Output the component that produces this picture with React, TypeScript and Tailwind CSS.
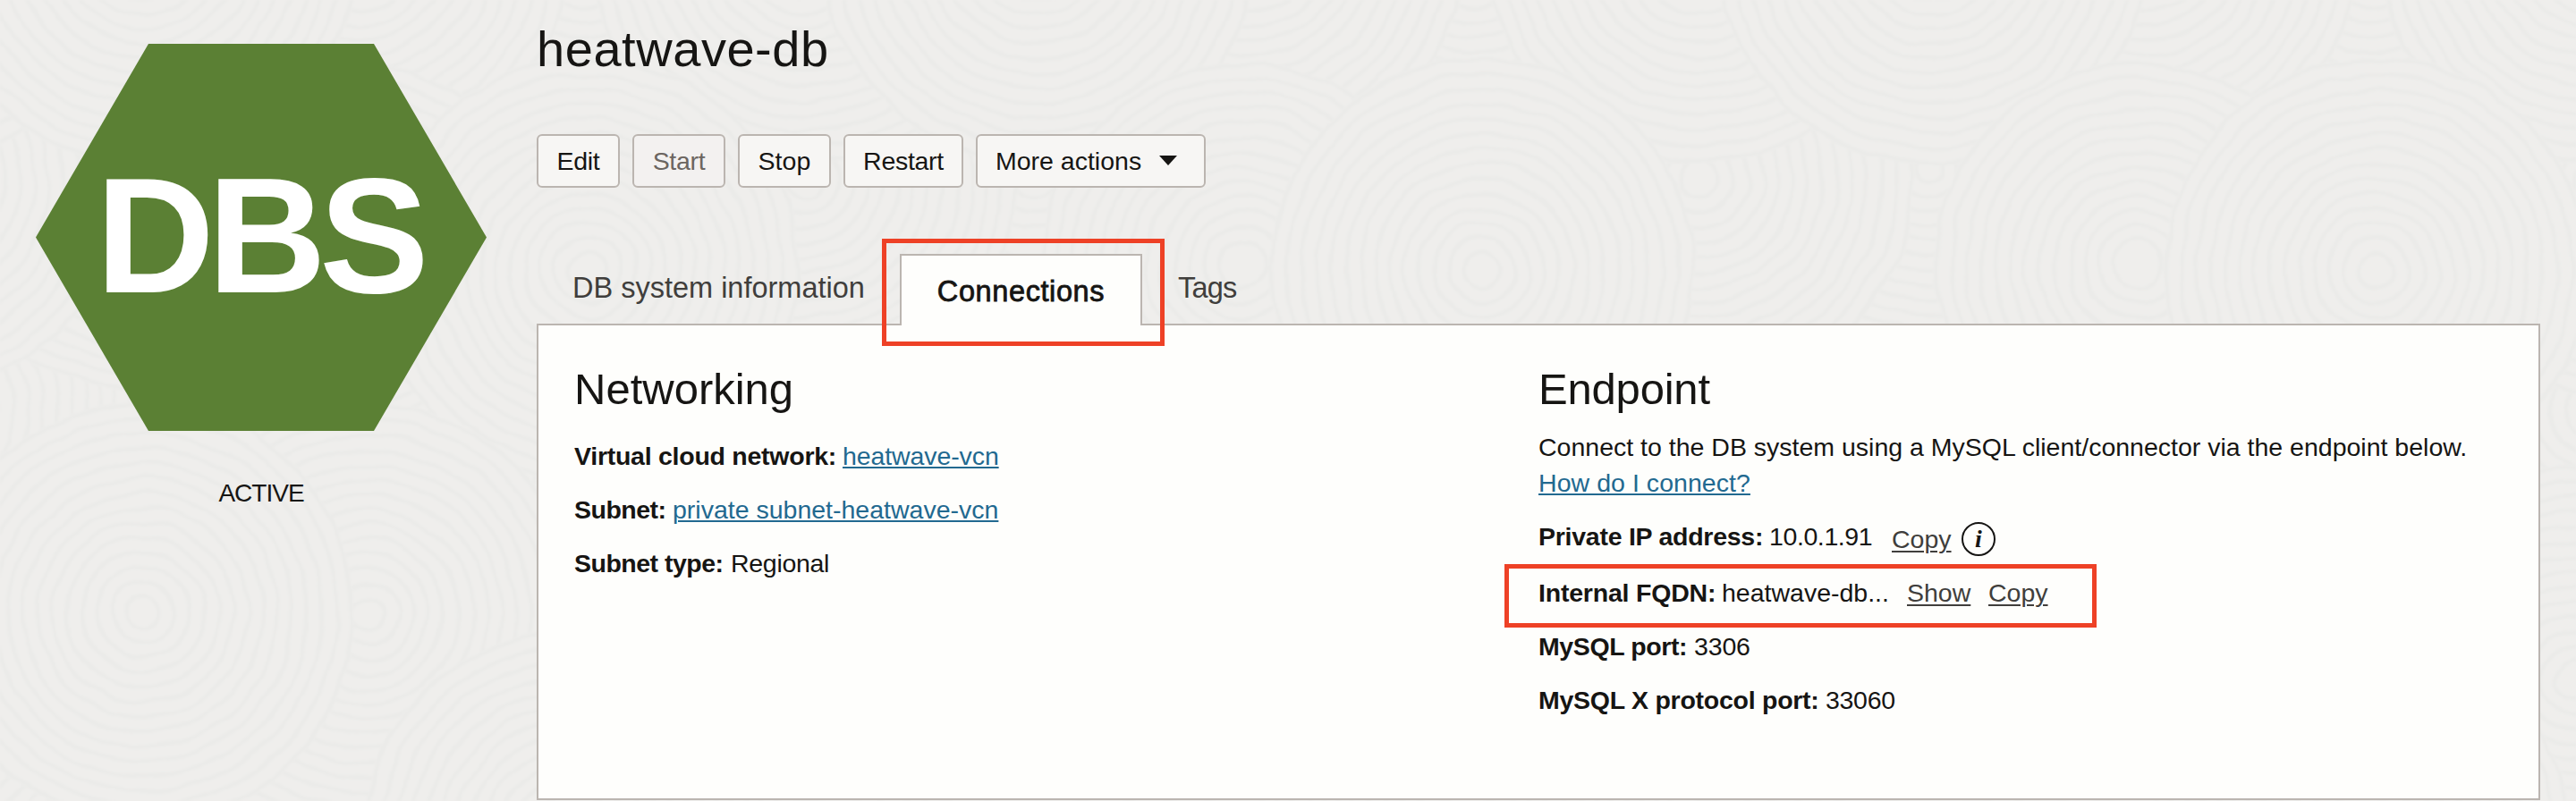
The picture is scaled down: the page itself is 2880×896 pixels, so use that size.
import React from "react";

type Ring = { x: number; y: number; r: number };

/* Later rings overlap the earlier ones. The motif repeats every 1000px. */
const MOTIF: Ring[] = [
  { x: 500, y: 520, r: 250 },
  { x: 900, y: 460, r: 250 },
  { x: 157, y: 188, r: 250 },
  { x: 900, y: 200, r: 240 },
  { x: 650, y: -40, r: 250 },
  { x: 400, y: -60, r: 240 },
  { x: 900, y: -60, r: 242 },
  { x: 160, y: -60, r: 244 },
  { x: 390, y: 296, r: 228 },
  { x: 657, y: 302, r: 238 },
  { x: 880, y: 760, r: 240 },
  { x: 411, y: 687, r: 236 },
  { x: 160, y: 685, r: 236 },
  { x: 640, y: 940, r: 236 },
];

const RINGS: Ring[] = MOTIF.flatMap((m) =>
  [-1000, 0, 1000, 2000].map((dx) => ({ ...m, x: m.x + dx })),
);

function Backdrop() {
  return (
    <svg className="absolute inset-0 h-full w-full" viewBox="0 0 2880 896" aria-hidden="true">
      <filter id="soften" x="0" y="0" width="2880" height="896" filterUnits="userSpaceOnUse">
        <feTurbulence type="fractalNoise" baseFrequency="0.02" numOctaves={2} seed={4} />
        <feDisplacementMap in="SourceGraphic" scale={11} xChannelSelector="R" yChannelSelector="G" />
        <feGaussianBlur stdDeviation={1.2} />
      </filter>
      <g filter="url(#soften)">
        <rect x="-20" y="-20" width="2920" height="936" fill="#efeeec" />
        {RINGS.map((ring, i) => {
          const steps = Math.floor(ring.r / 16.5);
          return (
            <g key={i} fill="none" stroke="#ebebe9" strokeWidth={5}>
              <circle cx={ring.x} cy={ring.y} r={ring.r} fill="#efeeec" stroke="none" />
              {Array.from({ length: steps }, (_, n) => (
                <circle key={n} cx={ring.x} cy={ring.y} r={ring.r - 3 - n * 16.5} />
              ))}
            </g>
          );
        })}
      </g>
    </svg>
  );
}

const BUTTON =
  "flex h-[60px] items-center justify-center rounded-[6px] border-2 border-[#bbb5b0] bg-[#f7f6f4] pb-px text-[28.5px] leading-[40px]";

function Label({ className, children }: { className: string; children: React.ReactNode }) {
  return <span className={`shrink-0 font-bold ${className}`}>{children}</span>;
}

function Link({ className = "", children }: { className?: string; children: React.ReactNode }) {
  return (
    <a
      className={`text-[#226990] underline decoration-[#226990] decoration-2 underline-offset-[2px] ${className}`}
    >
      {children}
    </a>
  );
}

function Action({ children }: { children: React.ReactNode }) {
  return (
    <a className="text-[#403e3c] underline decoration-2 underline-offset-[3px]">{children}</a>
  );
}

export default function App() {
  return (
    <div
      className="relative flex h-[896px] w-[2880px] overflow-hidden bg-[#efeeec] text-[#161513]"
      style={{ fontFamily: '"Liberation Sans", Arial, sans-serif' }}
    >
      <Backdrop />

      <aside className="relative flex w-[584px] shrink-0 flex-col items-center pt-[49px]">
        <svg width="504" height="433" viewBox="40 49 504 433" className="block">
          <polygon points="166,49 418,49 544,265.5 418,482 166,482 40,265.5" fill="#5b8034" />
          <text
            x="107"
            y="327.2"
            fill="#ffffff"
            fontSize="184"
            fontWeight="700"
            className="tracking-[-7.9px]"
          >
            DBS
          </text>
        </svg>
        <p className="mt-[50px] text-[28px] leading-[40px] tracking-[-1px]">ACTIVE</p>
      </aside>

      <main className="relative ml-4 w-[2240px] pt-[19px]">
        <h1 className="text-[56px] leading-[72px] tracking-[0.55px]">heatwave-db</h1>

        <div className="mt-[59px] flex">
          <button className={`${BUTTON} w-[93px] tracking-[-0.3px]`}>Edit</button>
          <button
            className={`${BUTTON} ml-[14px] w-[104px] bg-[#f3f1f0]! tracking-[-0.3px] text-[#6b6560]`}
          >
            Start
          </button>
          <button className={`${BUTTON} ml-[14px] w-[104px] tracking-[0.1px]`}>Stop</button>
          <button className={`${BUTTON} ml-[14px] w-[134px] tracking-[-0.3px]`}>Restart</button>
          <button className={`${BUTTON} ml-[14px] w-[257px] justify-start! pl-[20px]`}>
            More actions
            <svg width="20" height="11" viewBox="0 0 20 11" className="ml-[20px]">
              <path d="M0 0H20L10 11Z" fill="#161513" />
            </svg>
          </button>
        </div>

        <nav className="mt-[74px] flex h-[78px] text-[32.5px] leading-[40px] text-[#403e3c]">
          <a className="w-[406px] pt-[18px] pl-[40px]">DB system information</a>
          <div className="relative z-10 h-[80px] w-[271px] border-2 border-b-0 border-[#bbb5b0] bg-[#fefefc] pt-[20px] text-center tracking-[0.6px] text-[#161513] [-webkit-text-stroke:0.8px_#161513]">
            Connections
          </div>
          <a className="pt-[18px] pl-[40px] tracking-[-0.8px]">Tags</a>
        </nav>

        <section className="flex h-[533px] border-2 border-[#bbb5b0] bg-[#fefefc] pt-[41px] pl-[40px] text-[28.5px] leading-[40px]">
          <div className="w-[1078px] shrink-0">
            <h2 className="text-[49px] leading-[60px]">Networking</h2>
            <div className="mt-[25px] flex flex-col gap-5">
              <div className="flex">
                <Label className="w-[300px] tracking-[-0.26px]">Virtual cloud network:</Label>
                <Link className="tracking-[-0.1px]">heatwave-vcn</Link>
              </div>
              <div className="flex">
                <Label className="w-[110px] tracking-[-0.5px]">Subnet:</Label>
                <Link>private subnet-heatwave-vcn</Link>
              </div>
              <div className="flex">
                <Label className="w-[175px] tracking-[-0.5px]">Subnet type:</Label>
                <span className="tracking-[-0.3px]">Regional</span>
              </div>
            </div>
          </div>

          <div>
            <h2 className="text-[49px] leading-[60px] tracking-[-0.2px]">Endpoint</h2>
            <p className="mt-[15px] whitespace-nowrap">
              Connect to the DB system using a MySQL client/connector via the endpoint below.
              <br />
              <Link className="tracking-[0.05px]">How do I connect?</Link>
            </p>
            <div className="mt-5 flex h-10">
              <Label className="w-[258px] tracking-[-0.26px]">Private IP address:</Label>
              <span className="w-[137px] tracking-[-0.4px]">10.0.1.91</span>
              <span className="w-[78px] pt-[3px]">
                <Action>Copy</Action>
              </span>
              <span className="mt-1 flex h-[38px] w-[38px] items-center justify-center rounded-full border-[2.5px] border-[#161513]">
                <i
                  className="text-[28px] leading-[32px] font-bold"
                  style={{ fontFamily: '"Liberation Serif", serif' }}
                >
                  i
                </i>
              </span>
            </div>
            <div className="mt-[23px] flex h-10">
              <Label className="w-[205px] tracking-[-0.2px]">Internal FQDN:</Label>
              <span className="w-[207px]">heatwave-db...</span>
              <span className="w-[91px]">
                <Action>Show</Action>
              </span>
              <Action>Copy</Action>
            </div>
            <div className="mt-5 flex">
              <Label className="w-[174px] tracking-[-0.4px]">MySQL port:</Label>
              <span className="tracking-[-0.15px]">3306</span>
            </div>
            <div className="mt-5 flex">
              <Label className="w-[321px] tracking-[-0.26px]">MySQL X protocol port:</Label>
              <span className="tracking-[-0.3px]">33060</span>
            </div>
          </div>
        </section>
      </main>

      <div className="absolute top-[267px] left-[986px] z-20 h-[120px] w-[316px] border-[5px] border-[#ee4126]" />
      <div className="absolute top-[631px] left-[1682px] z-20 h-[71px] w-[662px] border-[5px] border-[#ee4126]" />
    </div>
  );
}
